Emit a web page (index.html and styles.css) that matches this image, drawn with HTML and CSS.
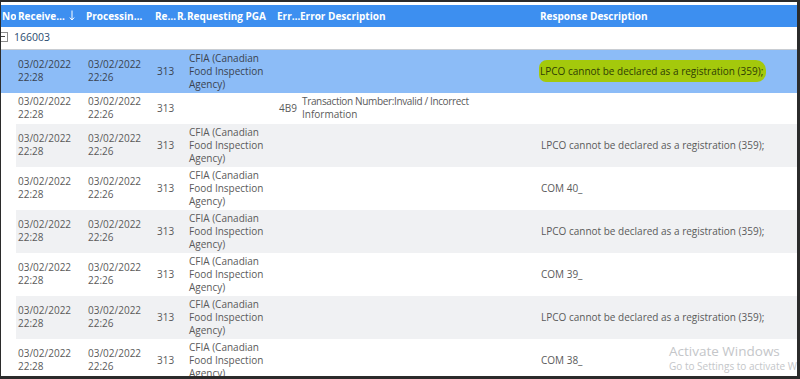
FILE: index.html
```html
<!DOCTYPE html>
<html>
<head>
<meta charset="utf-8">
<link rel="stylesheet" href="styles.css">
</head>
<body>
<div class="frame">
  <table class="grid">
    <colgroup>
      <col class="c-no"><col class="c-rec"><col class="c-proc"><col class="c-re"><col class="c-r"><col class="c-pga"><col class="c-err"><col class="c-edesc"><col class="c-resp">
    </colgroup>
    <thead>
      <tr class="head">
        <th class="h-no">No</th>
        <th class="h-rec">Receive… <svg class="sort" width="6" height="11" viewBox="0 0 6 11"><path d="M3 0.5V10M0.8 7.6L3 10L5.2 7.6" fill="none" stroke="#fff" stroke-width="1"/></svg></th>
        <th class="h-proc">Processin…</th>
        <th class="h-re">Re…</th>
        <th class="h-r">R.</th>
        <th class="h-pga">Requesting PGA</th>
        <th class="h-err">Err…</th>
        <th class="h-edesc">Error Description</th>
        <th class="h-resp">Response Description</th>
      </tr>
    </thead>
    <tbody>
      <tr class="group">
        <td colspan="9"><span class="toggle"></span><span class="gkey">166003</span></td>
      </tr>
      <tr class="row sel">
        <td></td>
        <td class="d-date">03/02/2022<br>22:28</td>
        <td class="d-date">03/02/2022<br>22:26</td>
        <td class="d-re">313</td>
        <td></td>
        <td class="d-pga">CFIA (Canadian<br>Food Inspection<br>Agency)</td>
        <td></td>
        <td></td>
        <td class="d-resp"><span class="marker">LPCO cannot be declared as a registration (359);</span></td>
      </tr>
      <tr class="row two">
        <td></td>
        <td class="d-date">03/02/2022<br>22:28</td>
        <td class="d-date">03/02/2022<br>22:26</td>
        <td class="d-re">313</td>
        <td></td>
        <td class="d-pga"></td>
        <td class="d-err">4B9</td>
        <td class="d-edesc"><span class="narrow">Transaction Number:Invalid / Incorrect</span><br>Information</td>
        <td class="d-resp"></td>
      </tr>
      <tr class="row alt">
        <td class="blank"></td>
        <td class="d-date">03/02/2022<br>22:28</td>
        <td class="d-date">03/02/2022<br>22:26</td>
        <td class="d-re">313</td>
        <td></td>
        <td class="d-pga">CFIA (Canadian<br>Food Inspection<br>Agency)</td>
        <td></td>
        <td></td>
        <td class="d-resp">LPCO cannot be declared as a registration (359);</td>
      </tr>
      <tr class="row">
        <td></td>
        <td class="d-date">03/02/2022<br>22:28</td>
        <td class="d-date">03/02/2022<br>22:26</td>
        <td class="d-re">313</td>
        <td></td>
        <td class="d-pga">CFIA (Canadian<br>Food Inspection<br>Agency)</td>
        <td></td>
        <td></td>
        <td class="d-resp">COM 40_</td>
      </tr>
      <tr class="row alt">
        <td class="blank"></td>
        <td class="d-date">03/02/2022<br>22:28</td>
        <td class="d-date">03/02/2022<br>22:26</td>
        <td class="d-re">313</td>
        <td></td>
        <td class="d-pga">CFIA (Canadian<br>Food Inspection<br>Agency)</td>
        <td></td>
        <td></td>
        <td class="d-resp">LPCO cannot be declared as a registration (359);</td>
      </tr>
      <tr class="row">
        <td></td>
        <td class="d-date">03/02/2022<br>22:28</td>
        <td class="d-date">03/02/2022<br>22:26</td>
        <td class="d-re">313</td>
        <td></td>
        <td class="d-pga">CFIA (Canadian<br>Food Inspection<br>Agency)</td>
        <td></td>
        <td></td>
        <td class="d-resp">COM 39_</td>
      </tr>
      <tr class="row alt">
        <td class="blank"></td>
        <td class="d-date">03/02/2022<br>22:28</td>
        <td class="d-date">03/02/2022<br>22:26</td>
        <td class="d-re">313</td>
        <td></td>
        <td class="d-pga">CFIA (Canadian<br>Food Inspection<br>Agency)</td>
        <td></td>
        <td></td>
        <td class="d-resp">LPCO cannot be declared as a registration (359);</td>
      </tr>
      <tr class="row">
        <td></td>
        <td class="d-date">03/02/2022<br>22:28</td>
        <td class="d-date">03/02/2022<br>22:26</td>
        <td class="d-re">313</td>
        <td></td>
        <td class="d-pga">CFIA (Canadian<br>Food Inspection<br>Agency)</td>
        <td></td>
        <td></td>
        <td class="d-resp">COM 38_</td>
      </tr>
    </tbody>
  </table>
  <div class="watermark">
    <div class="wm-title">Activate Windows</div>
    <div class="wm-sub">Go to Settings to activate Windows.</div>
  </div>
</div>
</body>
</html>
```

FILE: styles.css
```css
html, body {
  margin: 0;
  padding: 0;
  background: #ffffff;
}

.frame {
  position: relative;
  width: 800px;
  height: 379px;
  box-sizing: border-box;
  border-top: 2px solid #2b2b2b;
  border-left: 1px solid #2b2b2b;
  border-right: 3px solid #2b2b2b;
  border-bottom: 3px solid #2b2b2b;
  padding-top: 3px;
  overflow: hidden;
  background: #ffffff;
  font-family: "Open Sans", "Noto Sans", sans-serif;
}

.grid {
  table-layout: fixed;
  width: 796px;
  border-collapse: collapse;
  border-spacing: 0;
  font-size: 10px;
  line-height: 13px;
  color: #5a5a5a;
}

.c-no { width: 15px; }
.c-rec { width: 70px; }
.c-proc { width: 67px; }
.c-re { width: 23px; }
.c-r { width: 10px; }
.c-pga { width: 89px; }
.c-err { width: 25px; }
.c-edesc { width: 237px; }
.c-resp { width: 260px; }

.head {
  background: #3d8ff0;
  height: 22px;
}

.head th {
  color: #ffffff;
  font-weight: 700;
  font-size: 10px;
  text-align: left;
  white-space: nowrap;
  overflow: hidden;
  padding: 0;
  vertical-align: middle;
}

.h-no { padding-left: 1px !important; }
.h-rec { padding-left: 2px !important; }
.h-re { padding-left: 2px !important; }
.h-r { padding-left: 1px !important; }
.h-pga { padding-left: 1px !important; }
.h-err { padding-left: 2px !important; }
.h-resp { padding-left: 3px !important; }

.sort {
  vertical-align: -1px;
  margin-left: 2px;
}

.group {
  height: 22px;
  border-bottom: 1px solid #c9cdd2;
}

.group td {
  padding: 0;
  vertical-align: middle;
  white-space: nowrap;
}

.toggle {
  display: inline-block;
  position: relative;
  width: 8px;
  height: 8px;
  margin-left: -3px;
  border: 1px solid #8d8d8d;
  background: #ffffff;
  vertical-align: -1px;
}

.toggle::after {
  content: "";
  position: absolute;
  left: 2px;
  top: 3px;
  width: 4px;
  height: 1px;
  background: #444444;
}

.gkey {
  margin-left: 6px;
  font-size: 10.5px;
  color: #2b4b70;
}

.row td {
  padding: 2px 0 2px 2px;
  vertical-align: middle;
  height: 39px;
}

.row.two td {
  height: 27px;
}

.row.alt td {
  background: #f0f1f3;
}

.row.alt td.blank {
  background: #ffffff;
}

.row.sel td {
  background: #8cbcf7;
  color: #3a4350;
}

.d-re { padding-left: 4px !important; }
.d-pga { padding-left: 3px !important; }
.d-err { padding-left: 4px !important; }
.d-resp { padding-left: 4px !important; }

.narrow {
  letter-spacing: -0.35px;
}

.marker {
  background: #a4c90c;
  color: #2f3d05;
  border-radius: 8px 10px 9px 7px;
  padding: 4px 3px 4px 1px;
  margin-left: -2px;
}

.watermark {
  position: absolute;
  left: 668px;
  top: 340px;
  color: #c4c6c9;
  white-space: nowrap;
  font-family: "Open Sans", "Noto Sans", sans-serif;
}

.wm-title {
  font-size: 13.5px;
  line-height: 18px;
}

.wm-sub {
  font-size: 10px;
  line-height: 13px;
}
```
